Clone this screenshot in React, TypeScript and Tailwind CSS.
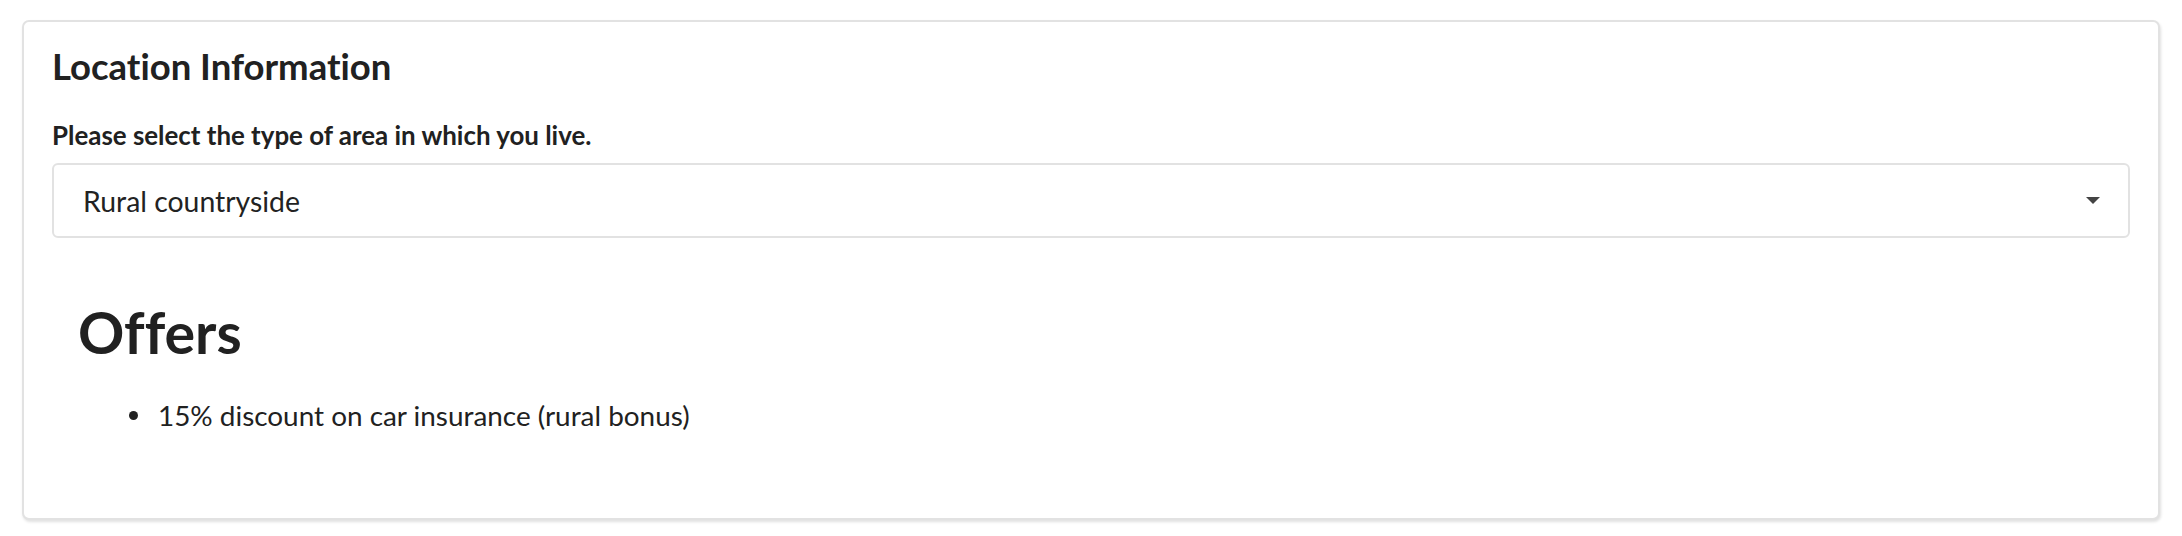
import React from 'react';

const offers = ['15% discount on car insurance (rural bonus)'];

function AreaSelect({ value }: { value: string }) {
  return (
    <div className="flex h-[75px] items-center justify-between rounded-[6px] border-2 border-[#e2e2e2] bg-white pl-[29px] pr-[28px]">
      <span className="text-[28.4px] leading-[34px] text-[#222]">{value}</span>
      <svg width="14" height="7" viewBox="0 0 14 7" className="text-[#444]">
        <polygon points="0,0 14,0 7,7" fill="currentColor" />
      </svg>
    </div>
  );
}

export default function App() {
  return (
    <div className="min-h-[536px] bg-white pt-[20px] font-[Lato,sans-serif] text-[#212121] [font-variant-ligatures:none]">
      <div className="ml-[22px] mr-[22px] rounded-[7px] border-2 border-[#e2e2e2] bg-white px-[28px] pt-[24px] pb-[83px] shadow-[1px_2px_3px_rgba(0,0,0,0.12)]">
        <h4 className="text-[36.5px] font-bold leading-[40px]">Location Information</h4>
        <label className="mt-[33px] block text-[25.9px] font-bold leading-[32px]">
          Please select the type of area in which you live.
        </label>
        <div className="mt-[12px]">
          <AreaSelect value="Rural countryside" />
        </div>

        {/* Offers for the chosen area */}
        <section className="mt-[62px] pl-[26px]">
          <h1 className="text-[57.4px] font-bold leading-[64px]">Offers</h1>
          <ul className="mt-[31px]">
            {offers.map((o) => (
              <li key={o} className="flex items-center">
                <span className="ml-[51px] h-[9px] w-[9px] rounded-full bg-[#222]" />
                <span className="ml-[20px] text-[27.9px] leading-[40px]">{o}</span>
              </li>
            ))}
          </ul>
        </section>
      </div>
    </div>
  );
}
